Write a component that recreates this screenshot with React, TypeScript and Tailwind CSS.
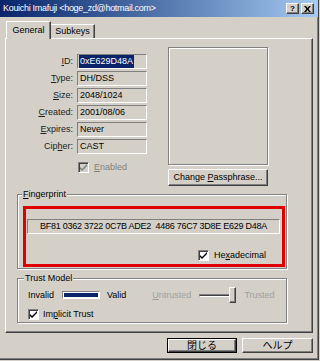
import type { ReactNode } from "react";

const raised =
  "border border-t-white border-l-white border-r-[#404040] border-b-[#404040] shadow-[inset_-1px_-1px_#808080]";
const sunken = "border border-t-[#808080] border-l-[#808080] border-r-white border-b-white";
const etched = "border border-[#808080] shadow-[inset_1px_1px_white,1px_1px_white]";

function U({ children }: { children: ReactNode }) {
  return <span className="underline underline-offset-[1px]">{children}</span>;
}

function CheckBox({ checked, disabled }: { checked?: boolean; disabled?: boolean }) {
  return (
    <div
      className={`w-[11px] h-[11px] shrink-0 ${sunken} shadow-[inset_1px_1px_#404040] flex items-center justify-center ${
        disabled ? "bg-[#d4d0c8]" : "bg-white"
      }`}
    >
      {checked && (
        <svg width="7" height="7" viewBox="0 0 7 7">
          <path d="M0 3 L2 5 L7 0 L7 2 L2 7 L0 5 Z" fill={disabled ? "#808080" : "#000"} />
        </svg>
      )}
    </div>
  );
}

const fields: { label: ReactNode; value: string; selected?: boolean }[] = [
  { label: <><U>I</U>D:</>, value: "0xE629D48A", selected: true },
  { label: <><U>T</U>ype:</>, value: "DH/DSS" },
  { label: <><U>S</U>ize:</>, value: "2048/1024" },
  { label: <><U>C</U>reated:</>, value: "2001/08/06" },
  { label: <><U>E</U>xpires:</>, value: "Never" },
  { label: <>Cip<U>h</U>er:</>, value: "CAST" },
];

export default function App() {
  return (
    <div className="w-[320px] h-[361px] bg-[#d4d0c8] font-['Liberation_Sans','Noto_Sans_CJK_JP',sans-serif] text-[9px] leading-none text-black overflow-hidden">
      <div className="w-[319px] h-[360px] border-r border-b border-[#404040] shadow-[inset_-1px_-1px_#808080]">
        {/* Title bar */}
        <div className="h-[17px] flex items-center pl-[3px] pr-[4px] bg-linear-to-r from-[#0a246a] to-[#a6caf0]">
          <span className="text-white text-[9px] tracking-[-0.3px]">Kouichi Imafuji &lt;hoge_zd@hotmail.com&gt;</span>
          <div className="ml-auto flex gap-[2px]">
            <div className={`w-[13px] h-[11px] bg-[#d4d0c8] ${raised} flex items-center justify-center font-bold text-[8px]`}>?</div>
            <div className={`w-[13px] h-[11px] bg-[#d4d0c8] ${raised} flex items-center justify-center`}>
              <svg width="7" height="6" viewBox="0 0 7 6">
                <path d="M0 0 L2 0 L3.5 2 L5 0 L7 0 L4.5 3 L7 6 L5 6 L3.5 4 L2 6 L0 6 L2.5 3 Z" fill="#000" />
              </svg>
            </div>
          </div>
        </div>

        {/* Tabs */}
        <div className="mt-[3px] pl-[6px] flex items-end h-[18px] relative z-10">
          <div className="w-[45px] h-[18px] border-t border-l border-t-white border-l-white border-r border-r-[#404040] shadow-[inset_-1px_0_#808080] bg-[#d4d0c8] flex items-center justify-center mb-[-1px] pb-[1px]">
            General
          </div>
          <div className="w-[44px] h-[14px] border-t border-t-white border-r border-r-[#404040] shadow-[inset_-1px_0_#808080] flex items-center justify-center">
            Subkeys
          </div>
        </div>

        {/* Panel */}
        <div className={`ml-[5px] w-[308px] h-[295px] ${raised}`}>
          <div className="flex pt-[8px]">
            <div className="w-[141px] pt-[7px] flex flex-col gap-[2px]">
              {fields.map((f, i) => (
                <div key={i} className="flex items-center h-[15px]">
                  <div className="w-[69px] text-right pr-[2px] text-[#202020]">{f.label}</div>
                  <div className={`w-[70px] h-[15px] ml-[2px] ${sunken} flex items-center pl-[1px]`}>
                    {f.selected ? (
                      <span className="bg-[#0a246a] text-white px-[1px] py-[2px]">{f.value}</span>
                    ) : (
                      <span className="pl-[1px]">{f.value}</span>
                    )}
                  </div>
                </div>
              ))}
              <div className="flex items-center mt-[6px] ml-[72px] gap-[5px] text-[#808080]">
                <CheckBox checked disabled />
                <span>
                  <U>E</U>nabled
                </span>
              </div>
            </div>
            <div className="ml-[21px] flex flex-col">
              <div className={`w-[100px] h-[118px] ${etched}`} />
              <div className={`mt-[4px] w-[100px] h-[17px] ${raised} flex items-center justify-center`}>
                <span>
                  Change <U>P</U>assphrase...
                </span>
              </div>
            </div>
          </div>

          {/* Fingerprint */}
          <div className={`relative mt-[8px] ml-[11px] w-[270px] h-[75px] ${etched}`}>
            <span className="absolute -top-[5px] left-[4px] bg-[#d4d0c8] px-[1px]">
              <U>F</U>ingerprint
            </span>
            <div className="mt-[11px] ml-[5px] w-[262px] h-[61px] border-[3px] border-[#e00000]">
              <div className={`mt-[10px] ml-[1px] w-[253px] h-[15px] ${sunken} flex items-center justify-center whitespace-pre tracking-[-0.25px]`}>
                BF81 0362 3722 0C7B ADE2  4486 76C7 3D8E E629 D48A
              </div>
              <div className="mt-[16px] ml-[172px] flex items-center gap-[5px]">
                <CheckBox checked />
                <span>
                  He<U>x</U>adecimal
                </span>
              </div>
            </div>
          </div>

          {/* Trust Model */}
          <div className={`relative mt-[9px] ml-[11px] w-[270px] h-[45px] ${etched}`}>
            <span className="absolute -top-[5px] left-[6px] bg-[#d4d0c8] px-[1px]">Trust Model</span>
            <div className="flex items-center h-[16px] mt-[8px] ml-[10px]">
              <span className="w-[34px]">Invalid</span>
              <div className={`w-[38px] h-[8px] ${sunken} bg-white p-[1px]`}>
                <div className="w-full h-full bg-[#0a246a]" />
              </div>
              <span className="ml-[7px]">Valid</span>
              <span className="ml-[26px] text-[#a0a0a0]">
                <U>U</U>ntrusted
              </span>
              <div className="relative ml-[8px] w-[37px] h-[16px] flex items-center">
                <div className={`w-[33px] h-[3px] ${sunken} shadow-[inset_1px_1px_#404040]`} />
                <div className={`absolute right-0 top-0 w-[7px] h-[16px] bg-[#d4d0c8] ${raised}`} />
              </div>
              <span className="ml-[8px] text-[#a0a0a0]">Trusted</span>
            </div>
            <div className="flex items-center mt-[6px] ml-[10px] gap-[4px]">
              <CheckBox checked />
              <span>
                Im<U>p</U>licit Trust
              </span>
            </div>
          </div>
        </div>

        {/* Buttons */}
        <div className="mt-[5px] ml-[167px] flex gap-[5px]">
          <div className="w-[70px] h-[15px] border border-black">
            <div className={`w-full h-full ${raised} flex items-center justify-center text-[10px]`}>閉じる</div>
          </div>
          <div className={`w-[71px] h-[15px] ${raised} flex items-center justify-center text-[10px]`}>ヘルプ</div>
        </div>
      </div>
    </div>
  );
}
